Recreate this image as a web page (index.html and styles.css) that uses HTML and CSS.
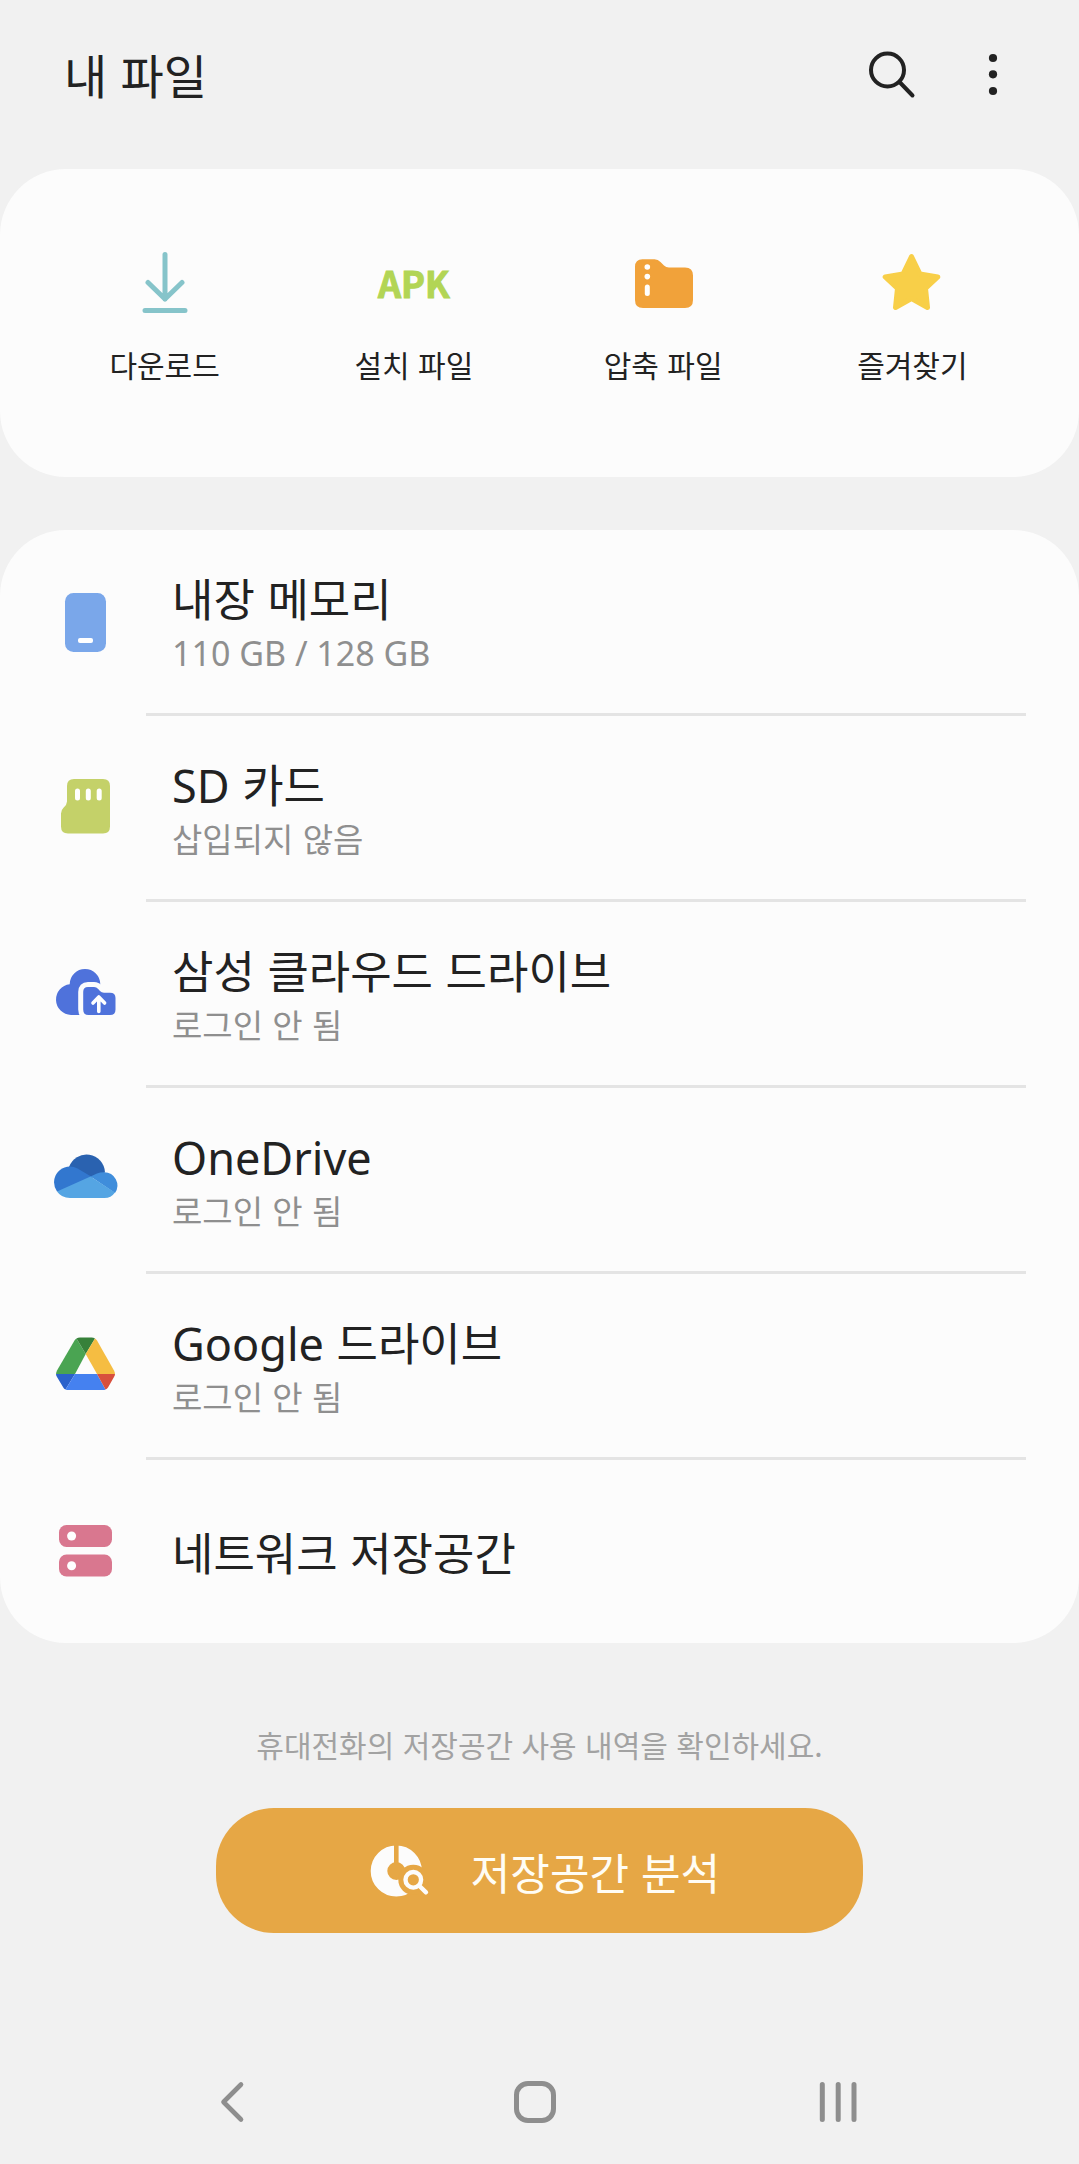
FILE: index.html
```html
<!DOCTYPE html>
<html lang="ko">
<head>
  <meta charset="utf-8">
  <meta name="viewport" content="width=device-width, initial-scale=1">
  <title>내 파일</title>
  <link rel="stylesheet" href="styles.css">
</head>
<body>
  <header class="topbar">
    <h1 class="topbar-title">내 파일</h1>
    <div class="topbar-actions">
      <button class="icon-button" type="button" aria-label="검색">
        <svg class="icon" viewBox="0 0 72 72" fill="none" stroke="#222" stroke-width="4" stroke-linecap="round"><circle cx="31.5" cy="32" r="16.5"/><path d="M43.5 44L56.500 57.500"/></svg>
      </button>
      <button class="icon-button" type="button" aria-label="더보기">
        <svg class="icon" viewBox="0 0 72 72" fill="#222"><circle cx="36" cy="20" r="4.100"/><circle cx="36" cy="36.300" r="4.100"/><circle cx="36" cy="53" r="4.100"/></svg>
      </button>
    </div>
  </header>

  <main class="content">
    <nav class="card shortcuts" aria-label="바로가기">
      <a class="shortcut" href="#downloads">
        <svg class="icon" viewBox="0 0 72 72" fill="none" stroke="#86c4ca" stroke-width="5" stroke-linecap="round" stroke-linejoin="round"><path d="M36 8.500V53M19 36.500L36 53L53 36.500M16 64.500H56"/></svg>
        <span class="shortcut-label">다운로드</span>
      </a>
      <a class="shortcut" href="#apk">
        <span class="icon apk" aria-hidden="true">APK</span>
        <span class="shortcut-label">설치 파일</span>
      </a>
      <a class="shortcut" href="#archives">
        <svg class="icon" viewBox="0 0 72 72"><path fill="#f1a23a" d="M15.500 13.300H27.500Q31 13.300 33.500 16L37 19.500Q39 21.500 42 21.500H58Q66 21.500 66 29.500V54Q66 62 58 62H16Q8 62 8 54V21Q8 13.300 15.500 13.300Z"/><g fill="#fff"><circle cx="20.300" cy="21" r="2.800"/><circle cx="20.300" cy="30.600" r="2.800"/><rect x="17.800" y="38.500" width="5" height="11.500" rx="2.500"/></g></svg>
        <span class="shortcut-label">압축 파일</span>
      </a>
      <a class="shortcut" href="#favorites">
        <svg class="icon" viewBox="0 0 72 72"><path fill="#f8cf48" stroke="#f8cf48" stroke-width="5" stroke-linejoin="round" d="M35.500 10.500L44 28L61.800 31L49.500 42.300L51.500 61.500L35.500 52.500L19.500 61.500L21.500 42.300L9.200 31L27 28Z"/></svg>
        <span class="shortcut-label">즐겨찾기</span>
      </a>
    </nav>

    <ul class="card storage-list">
      <li>
        <a class="storage" href="#internal">
          <svg class="icon" viewBox="0 0 72 72"><rect x="15" y="6" width="41" height="59" rx="8.500" fill="#7aa7ea"/><rect x="28" y="51" width="15" height="5" rx="2" fill="#fff"/></svg>
          <span class="storage-body">
            <span class="storage-name">내장 메모리</span>
            <span class="storage-detail storage-capacity"><span class="latin">110 GB / 128 GB</span></span>
          </span>
        </a>
      </li>
      <li>
        <a class="storage" href="#sd">
          <svg class="icon" viewBox="0 0 72 72"><path fill="#c4d169" d="M24 6H53Q60 6 60 13V53.500Q60 60.500 53 60.500H18Q11 60.500 11 53.500V40.500Q11 37 13.500 34.700Q17 31.500 17 28.500V13Q17 6 24 6Z"/><path stroke="#fff" stroke-width="5" stroke-linecap="round" d="M27.500 18V25M38.300 18V25M49.200 18V25"/></svg>
          <span class="storage-body">
            <span class="storage-name"><span class="latin">SD</span> 카드</span>
            <span class="storage-detail">삽입되지 않음</span>
          </span>
        </a>
      </li>
      <li>
        <a class="storage" href="#samsung-cloud">
          <svg class="icon" viewBox="0 0 72 72"><path fill="#4f72db" d="M19.700 25.300A15.300 15.300 0 0 1 50.300 25.300L50 56H21A15.400 15.400 0 0 1 19.700 25.300Z"/><path fill="#4f72db" stroke="#fcfcfc" stroke-width="10" paint-order="stroke" stroke-linejoin="round" d="M38 28H44Q46.500 28 48.200 30L50 32Q51.500 33.700 54 33.700H60Q65.500 33.700 65.500 39V50.500Q65.500 56 60 56H38.500Q33.200 56 33.200 50.500V33Q33.200 28 38 28Z"/><path fill="none" stroke="#fff" stroke-width="3.600" stroke-linecap="round" stroke-linejoin="round" d="M48.800 52.500V38.500M43 44L48.800 38L54.600 44"/></svg>
          <span class="storage-body">
            <span class="storage-name">삼성 클라우드 드라이브</span>
            <span class="storage-detail">로그인 안 됨</span>
          </span>
        </a>
      </li>
      <li>
        <a class="storage" href="#onedrive">
          <svg class="icon" viewBox="0 0 72 72"><path fill="#2a62b0" d="M19 22A18.500 18.500 0 0 1 55 27.500L41 33Z"/><path fill="#3277cf" d="M7 46.500A15.800 15.800 0 0 1 27.500 23.500L42 32L26 46Z"/><path fill="#3f8ddb" d="M40.500 31.500L47 28.500Q50 27.300 54 27.300A13.200 13.200 0 0 1 65 48Z"/><path fill="#55a5e3" d="M7 46.500L40.500 31.500L65 47.500A13 13 0 0 1 54 53H20Q11.500 53 7 46.500Z"/></svg>
          <span class="storage-body">
            <span class="storage-name"><span class="latin">OneDrive</span></span>
            <span class="storage-detail">로그인 안 됨</span>
          </span>
        </a>
      </li>
      <li>
        <a class="storage" href="#google-drive">
          <svg class="icon" viewBox="0 0 72 71"><path fill="#4aa452" d="M26.500 7L35.700 22.500L25 42.500H6Q6 41 7 39L24.500 9Q25.500 7.500 26.500 7Z"/><path fill="#37813a" d="M26.500 7Q28 6 30 6H41.500Q43.500 6 45 7L35.700 22.500Z"/><path fill="#f5bd42" d="M45 7Q46.200 7.800 47 9L64 39Q65 41 65 42.500H47L35.700 22.500Z"/><path fill="#2b62cb" d="M6 42.500H25L15.500 58Q14 57.300 13.300 56L7 45.500Q6 44 6 42.500Z"/><path fill="#4581f0" d="M25 42.500H47L55.500 58Q54.500 58.500 53 58.500H18.500Q17 58.500 15.500 58Z"/><path fill="#d84f3d" d="M47 42.500H65Q65 44 64 45.500L58 56Q57 57.500 55.500 58Z"/></svg>
          <span class="storage-body">
            <span class="storage-name"><span class="latin">Google</span> 드라이브</span>
            <span class="storage-detail">로그인 안 됨</span>
          </span>
        </a>
      </li>
      <li>
        <a class="storage" href="#network">
          <svg class="icon" viewBox="0 0 72 72"><g fill="#d9778f"><rect x="9" y="9" width="53" height="22" rx="7.500"/><rect x="9" y="38.500" width="53" height="22" rx="7.500"/></g><g fill="#fff"><circle cx="21.600" cy="20" r="4.500"/><circle cx="21.600" cy="49.800" r="4.500"/></g></svg>
          <span class="storage-body">
            <span class="storage-name">네트워크 저장공간</span>
          </span>
        </a>
      </li>
    </ul>

    <section class="analysis">
      <p class="analysis-hint">휴대전화의 저장공간 사용 내역을 확인하세요.</p>
      <button class="analysis-button" type="button">
        <svg class="icon" viewBox="0 0 72 72"><circle cx="37.300" cy="36" r="17.300" fill="none" stroke="#fcfcfc" stroke-width="16.600"/><path stroke="#e6a745" stroke-width="4.600" d="M37.300 9V30"/><circle cx="54.300" cy="44.800" r="15" fill="#e6a745"/><g fill="none" stroke="#fcfcfc" stroke-width="4.400" stroke-linecap="round"><circle cx="54.300" cy="44.800" r="7.800"/><path d="M60.500 51L67 57.300"/></g></svg>
        <span>저장공간 분석</span>
      </button>
    </section>
  </main>

  <nav class="system-nav" aria-label="시스템 탐색">
    <button class="icon-button" type="button" aria-label="뒤로">
      <svg class="icon" viewBox="0 0 72 72" fill="none" stroke="#8e8e8e" stroke-width="4.600" stroke-linecap="round" stroke-linejoin="round"><path d="M45 18.500L27.500 36L45 53.500"/></svg>
    </button>
    <button class="icon-button" type="button" aria-label="홈">
      <svg class="icon" viewBox="0 0 72 72" fill="none" stroke="#8e8e8e" stroke-width="5"><rect x="17.500" y="17.500" width="37" height="37" rx="11.500"/></svg>
    </button>
    <button class="icon-button" type="button" aria-label="최근 앱">
      <svg class="icon" viewBox="0 0 72 72" stroke="#8e8e8e" stroke-width="5" stroke-linecap="round"><path d="M20.300 18.500V53.500M36.200 18.500V53.500M52 18.500V53.500"/></svg>
    </button>
  </nav>
</body>
</html>
```
FILE: styles.css
```css
* {
  box-sizing: border-box;
}

body {
  display: flex;
  flex-direction: column;
  min-height: 100vh;
  margin: 0;
  background: #f1f1f1;
  color: #222;
  font-family: "Noto Sans CJK KR", sans-serif;
}

a {
  color: inherit;
  text-decoration: none;
}

button {
  border: 0;
  padding: 0;
  background: none;
  color: inherit;
  font: inherit;
  cursor: pointer;
}

/* Latin runs sit on the baseline of the surrounding Korean text */
.latin {
  font-family: "Noto Sans", sans-serif;
  line-height: 1;
}

.icon {
  display: block;
  flex: none;
  width: 72px;
  height: 72px;
}

.icon-button {
  width: 72px;
  height: 72px;
}

/* Title bar */
.topbar {
  display: flex;
  align-items: center;
  justify-content: space-between;
  height: 148px;
  margin-bottom: 21px;
  padding: 0 50px 0 64px;
}

.topbar-title {
  margin: 0;
  font-size: 47px;
  font-weight: 400;
  line-height: 72px;
}

.topbar-actions {
  display: flex;
  gap: 29px;
}

/* Cards */
.card {
  border-radius: 66px;
  background: #fcfcfc;
}

.shortcuts {
  display: grid;
  grid-template-columns: repeat(4, 1fr);
  margin-bottom: 53px;
  padding: 77px 42px 91px 40px;
}

.shortcut {
  display: flex;
  flex-direction: column;
  align-items: center;
  gap: 24px;
}

.shortcut-label {
  font-size: 30px;
  line-height: 44px;
}

.apk {
  color: #b2d555;
  font-size: 36px;
  font-weight: 700;
  line-height: 72px;
  text-align: center;
  -webkit-text-stroke: 1px #b2d555;
}

/* Storage locations */
.storage-list {
  margin: 0;
  padding: 0 53px 0 50px;
  list-style: none;
}

.storage {
  display: flex;
  align-items: center;
  gap: 24px;
}

.storage-body {
  display: flex;
  flex: 1;
  flex-direction: column;
  justify-content: center;
  min-height: 183px;
  padding-left: 26px;
}

.storage-list li:not(:last-child) .storage-body {
  box-sizing: content-box;
  border-bottom: 3px solid #e4e4e4;
}

.storage-name {
  font-size: 45px;
  line-height: 60px;
}

.storage-detail {
  color: #8f8f8f;
  font-size: 33px;
  line-height: 48px;
}

.storage-capacity {
  font-size: 34px;
}

/* Storage analysis */
.analysis {
  display: flex;
  flex-direction: column;
  align-items: center;
  gap: 42px;
  padding: 79px 0;
}

.analysis-hint {
  margin: 0;
  color: #a2a2a2;
  font-size: 30px;
  line-height: 44px;
}

.analysis-button {
  display: flex;
  align-items: center;
  justify-content: center;
  gap: 40px;
  width: 60%;
  height: 125px;
  border-radius: 58px;
  background: #e6a745;
  color: #fffdf5;
  font-size: 43px;
  line-height: 60px;
}

/* System navigation */
.system-nav {
  display: grid;
  grid-template-columns: repeat(3, 1fr);
  align-items: center;
  justify-items: center;
  height: 124px;
  margin-top: auto;
  padding: 0 90px 0 81px;
}
```
